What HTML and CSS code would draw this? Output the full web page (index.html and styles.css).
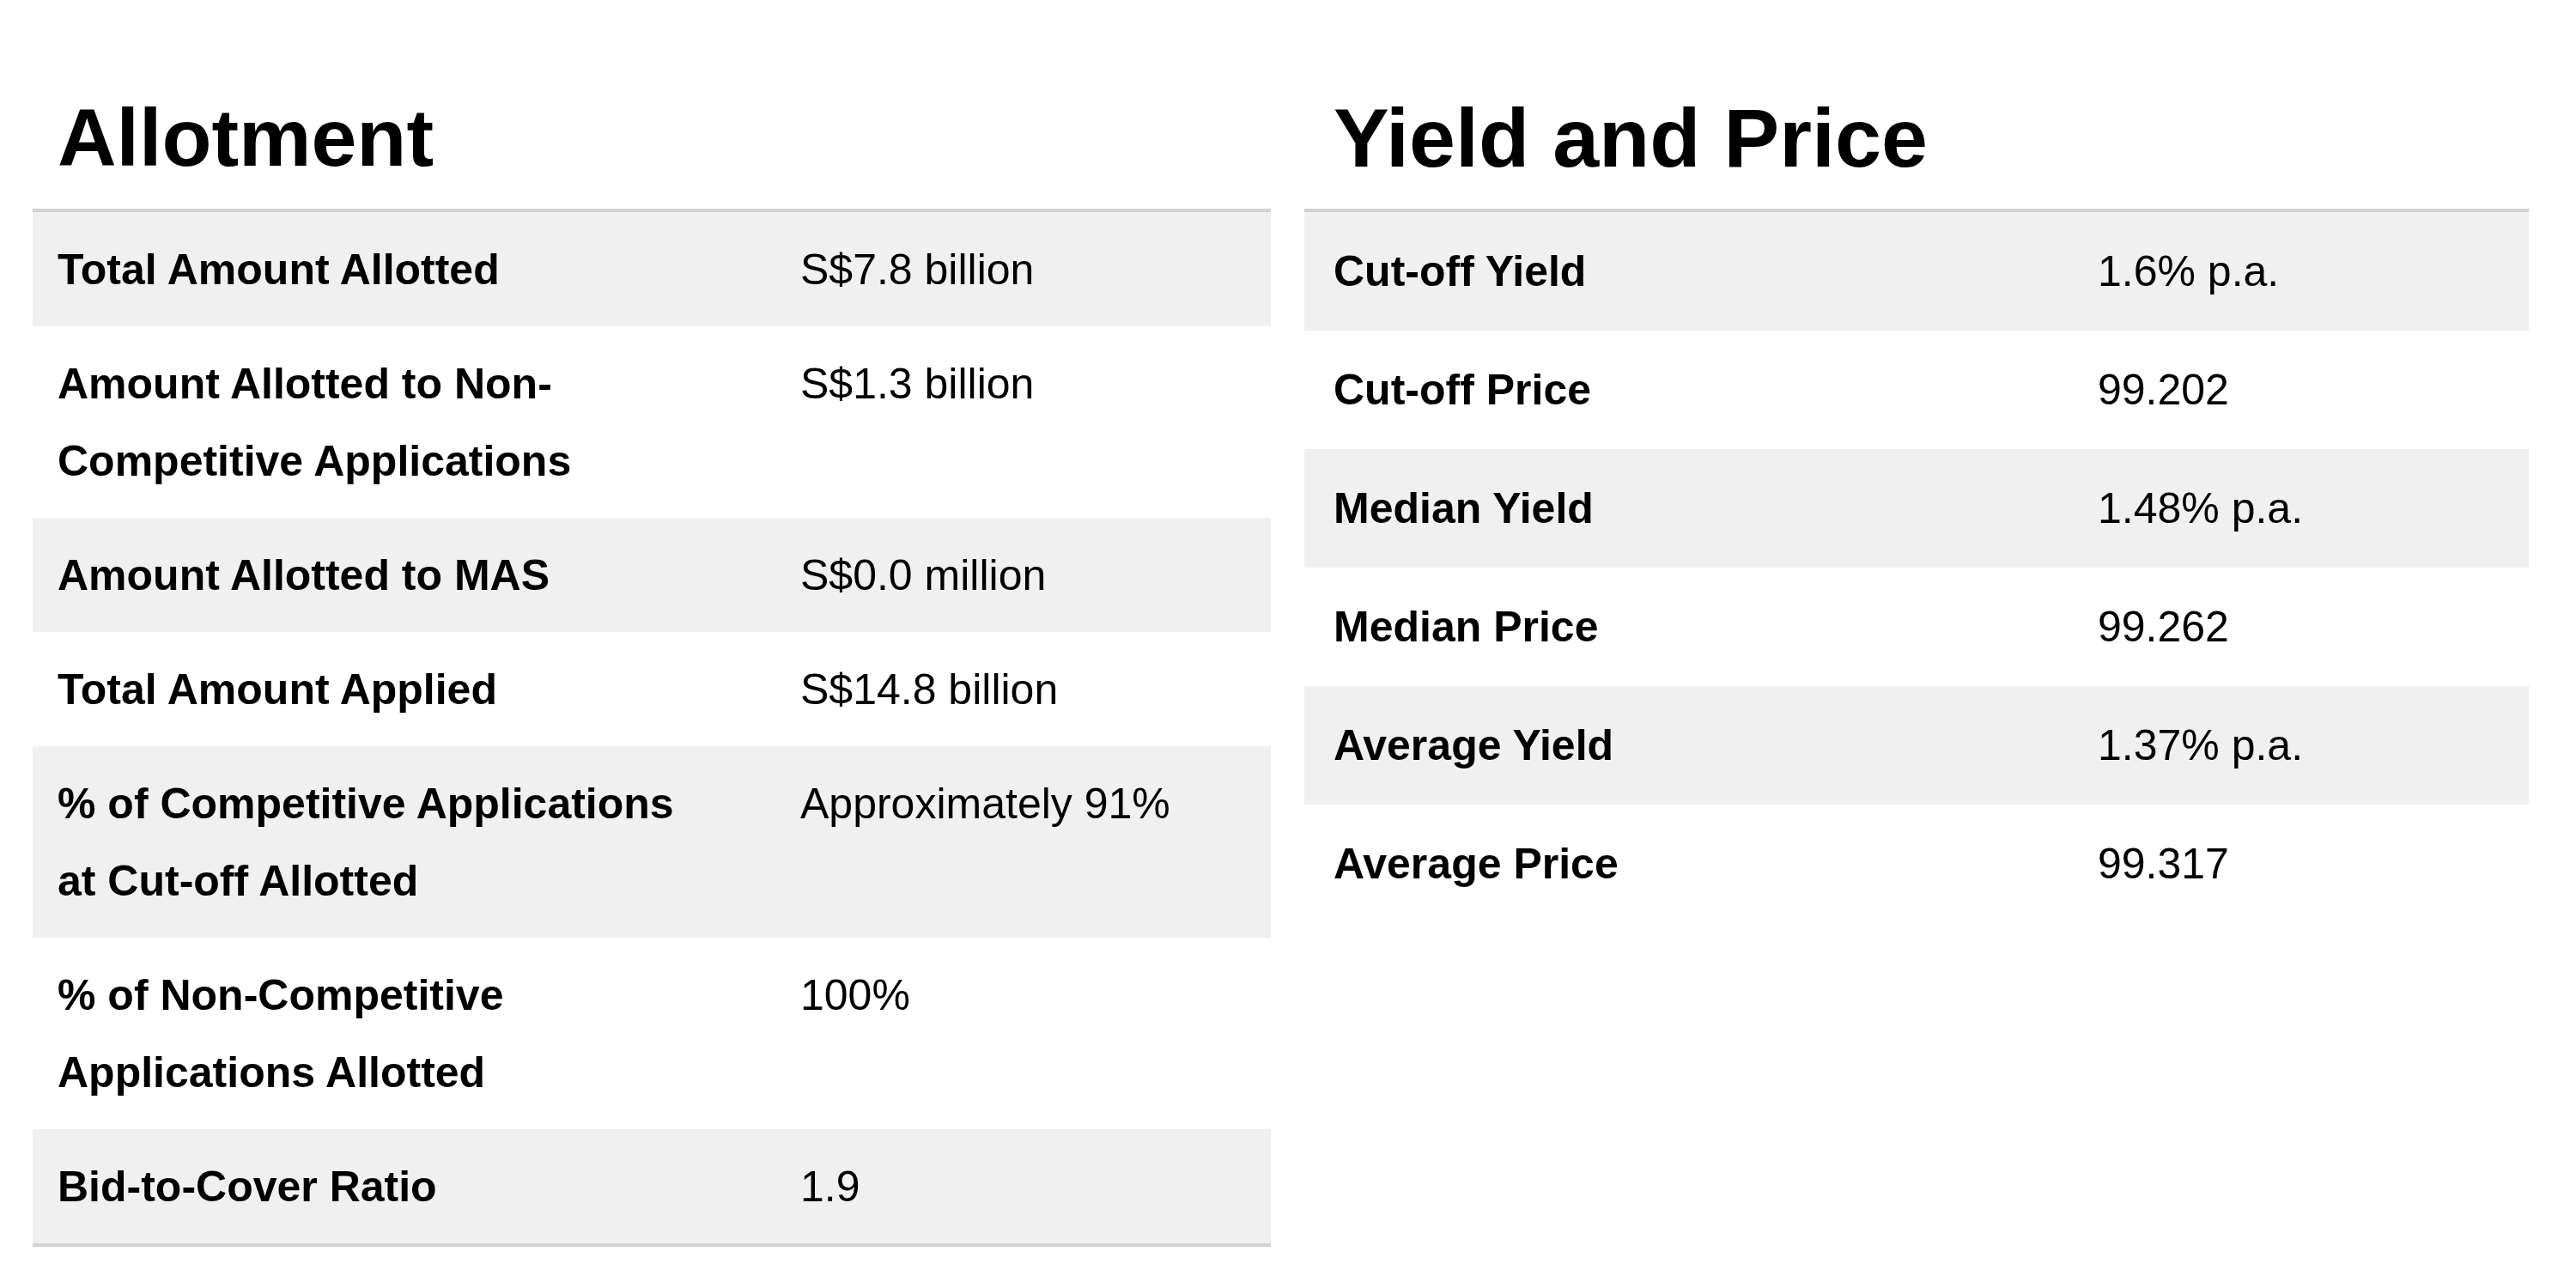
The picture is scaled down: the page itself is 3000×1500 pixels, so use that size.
FILE: index.html
```html
<!DOCTYPE html>
<html lang="en">
<head>
<meta charset="utf-8">
<title>Allotment / Yield and Price</title>
<link rel="stylesheet" href="styles.css">
</head>
<body>
<div class="page">
  <section class="panel panel-left">
    <h2 class="title">Allotment</h2>
    <table class="data data-left">
      <colgroup><col class="c1-left"><col></colgroup>
      <tbody>
        <tr><th>Total Amount Allotted</th><td>S$7.8 billion</td></tr>
        <tr><th>Amount Allotted to Non-<br>Competitive Applications</th><td>S$1.3 billion</td></tr>
        <tr><th>Amount Allotted to MAS</th><td>S$0.0 million</td></tr>
        <tr><th>Total Amount Applied</th><td>S$14.8 billion</td></tr>
        <tr><th>% of Competitive Applications<br>at Cut-off Allotted</th><td>Approximately 91%</td></tr>
        <tr><th>% of Non-Competitive<br>Applications Allotted</th><td>100%</td></tr>
        <tr><th>Bid-to-Cover Ratio</th><td>1.9</td></tr>
      </tbody>
    </table>
  </section>
  <section class="panel panel-right">
    <h2 class="title">Yield and Price</h2>
    <table class="data data-right">
      <colgroup><col class="c1-right"><col></colgroup>
      <tbody>
        <tr><th>Cut-off Yield</th><td>1.6% p.a.</td></tr>
        <tr><th>Cut-off Price</th><td>99.202</td></tr>
        <tr><th>Median Yield</th><td>1.48% p.a.</td></tr>
        <tr><th>Median Price</th><td>99.262</td></tr>
        <tr><th>Average Yield</th><td>1.37% p.a.</td></tr>
        <tr><th>Average Price</th><td>99.317</td></tr>
      </tbody>
    </table>
  </section>
</div>
</body>
</html>
```

FILE: styles.css
```css
html, body {
  margin: 0;
  padding: 0;
  background: #ffffff;
}

body {
  font-family: "Liberation Sans", Arial, sans-serif;
  color: #000000;
}

.page {
  display: flex;
  align-items: flex-start;
  gap: 39px;
  padding: 0 55px 0 38px;
}

.panel-left {
  width: 1442px;
  flex: none;
}

.panel-right {
  width: 1426px;
  flex: none;
}

.title {
  margin: 103px 0 25px 29px;
  font-size: 95px;
  line-height: 115px;
  font-weight: 700;
}

.panel-right .title {
  margin-left: 34px;
  font-size: 97px;
}

.data {
  width: 100%;
  border-collapse: collapse;
  table-layout: fixed;
  border-top: 4px solid #d2d2d2;
  border-bottom: 4px solid #d2d2d2;
  font-size: 50px;
  line-height: 90px;
}

.c1-left {
  width: 865px;
}

.c1-right {
  width: 890px;
}

.data th,
.data td {
  text-align: left;
  vertical-align: top;
  padding: 22px 0 21px 29px;
}

.data th {
  font-weight: 700;
}

.data td {
  font-weight: 400;
}

.data-right th,
.data-right td {
  padding: 24px 0 24px 34px;
}

.data tr:nth-child(odd) {
  background: #f0f0f0;
}

.data-right {
  border-bottom: none;
}
```
